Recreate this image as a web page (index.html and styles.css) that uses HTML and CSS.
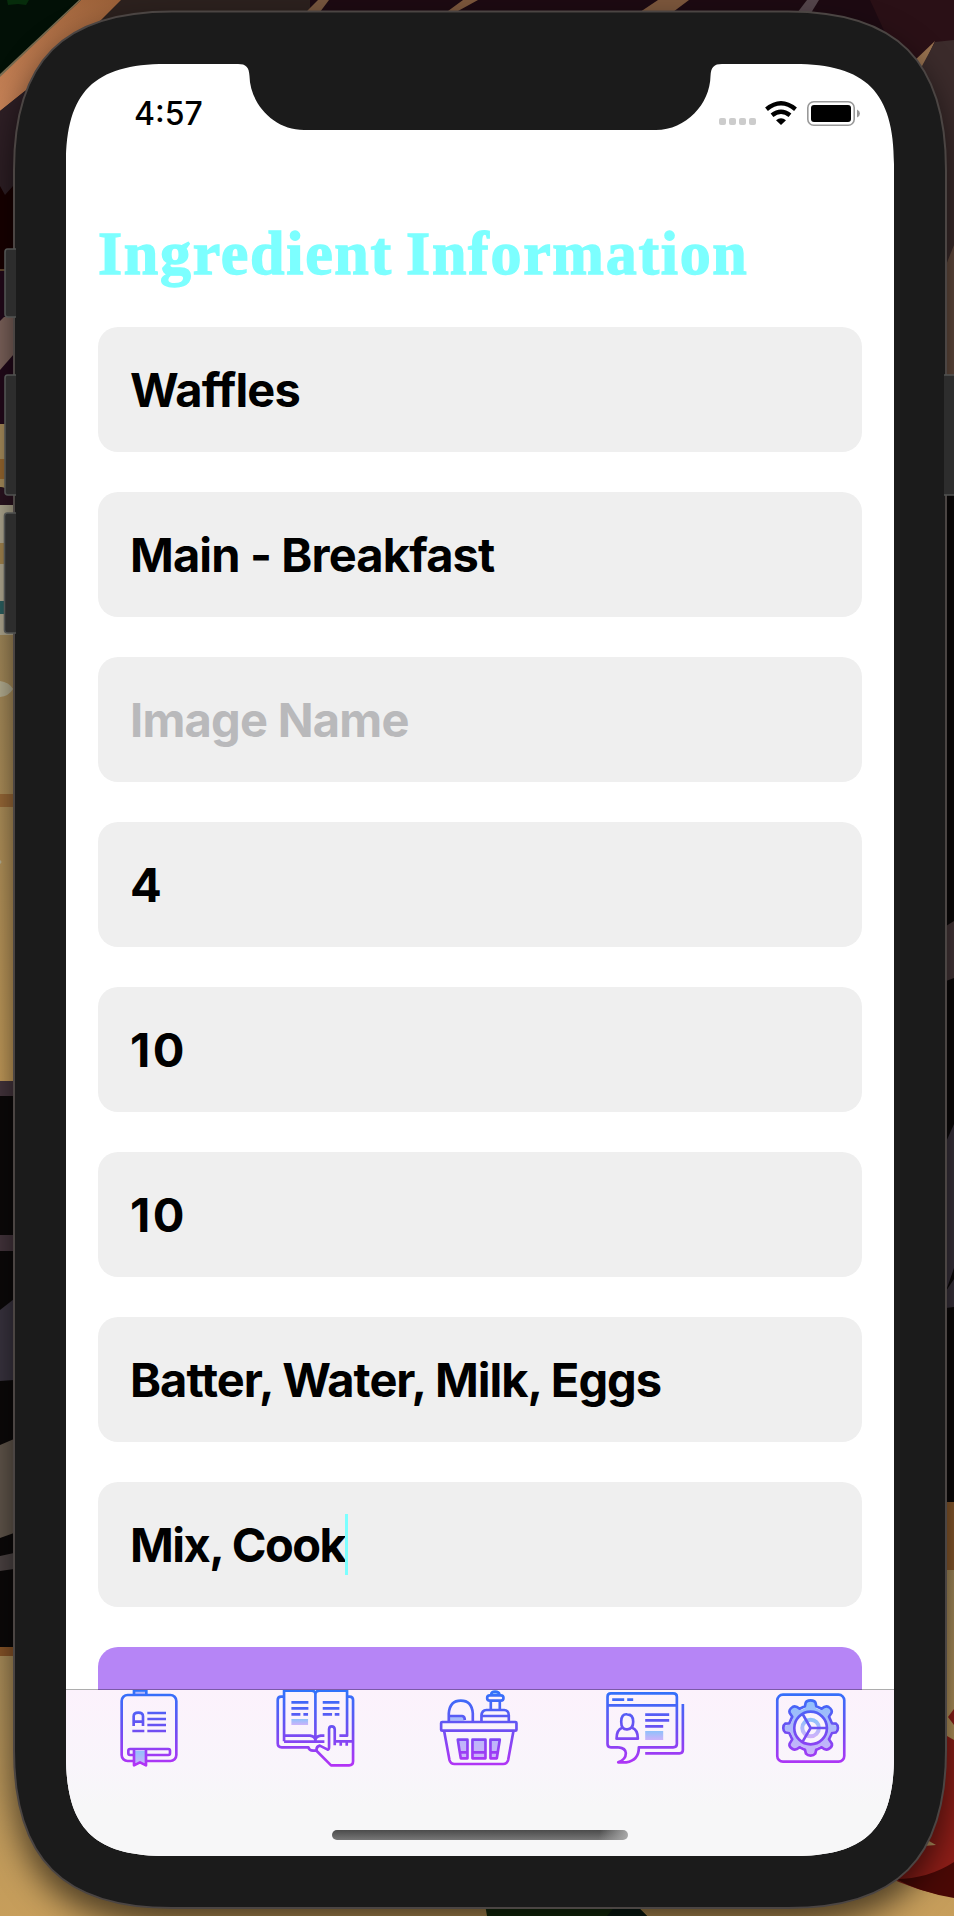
FILE: index.html
```
<!DOCTYPE html>
<html lang="en">
<head>
<meta charset="utf-8">
<title>Ingredient Information</title>
<link rel="stylesheet" href="styles.css">
</head>
<body>
<div class="desktop">
  <svg class="backdrop" viewBox="0 0 954 1916" aria-hidden="true">
    <defs>
      <linearGradient id="tan" x1="0" y1="0" x2="0" y2="1"><stop offset="0" stop-color="#a58b5b"/><stop offset="1" stop-color="#c79e5b"/></linearGradient>
      <linearGradient id="peach" x1="0" y1="1" x2="1" y2="0"><stop offset="0" stop-color="#c78257"/><stop offset="1" stop-color="#9a6038"/></linearGradient>
    </defs>
    <path fill="#0c0909" d="M0 0h954v1916H0z"/>
    <path fill="#2c211e" d="M0 60L120 0H325L0 195z"/>
    <path fill="#1d0a12" d="M310 0H954V200H310z"/>
    <path fill="#2a1016" d="M870 0h84v44l-50 30z"/>
    <path fill="#021006" d="M0 0h80L0 75z"/>
    <path fill="#062c0b" d="M7 0h22l-3 5-8-1-10 1z"/>
    <path fill="url(#peach)" d="M0 76L81 0h40L93 28 25 91 0 111z"/>
    <path fill="#776b50" d="M0 74L79 0h2L0 77z"/>
    <path fill="#77563e" d="M306 12L318 0h11l-9 12z"/>
    <path fill="#7c573c" d="M448 11L463 0h15l-20 11zM640 12L658 0h31l-16 12z"/>
    <path fill="#54454b" d="M797 13L807 0h12l-8 13z"/>
    <path fill="#97714f" d="M912 63l23-22-12 26z"/>
    <path fill="#3b2b2b" d="M922 66L935 42l19-2v210l-8 15z"/>
    <path fill="#634b3e" d="M954 245l-8 20v110h8z"/>
    <path fill="#2e1f25" d="M0 111L25 91 15 195H0z"/>
    <path fill="#180000" d="M0 186l5 9 8-9v84H0z"/>
    <path fill="#22091a" d="M0 270h14v154H0z"/>
    <path fill="#60482e" d="M0 269h14v2H0z"/>
    <path fill="#7f655d" d="M0 321l4-4h10v37L0 370z"/>
    <path fill="#a88d5b" d="M0 424h14v66L0 487z"/>
    <path fill="#97672f" d="M0 459h14v20H0z"/>
    <path fill="#2b1320" d="M0 487l14 3v15H0z"/>
    <path fill="#b3ab92" d="M0 505h14v130H0z"/>
    <path fill="#a3854f" d="M0 543h14v21H0z"/>
    <path fill="#2b6060" d="M0 601h14v13H0z"/>
    <path fill="url(#tan)" d="M0 635h14v446H0z"/>
    <path fill="#b9b294" d="M0 681q9 1 13 8-4 7-13 8zM0 860q3 2 0 4z"/>
    <path fill="#9c6b38" d="M0 794h14v13H0z"/>
    <path fill="#45353d" d="M0 1081h14v15H0zM0 1235h14v16H0z"/>
    <path fill="#3a3440" d="M0 1310l14-11v81l-14 1z"/>
    <path fill="#62574c" d="M0 1445l14-6v94l-14 5z"/>
    <path fill="#4d4444" d="M0 1556l14-3v16l-14 2z"/>
    <path fill="#8a5528" d="M0 1647h14v9H0z"/>
    <path fill="url(#tan)" d="M0 1656h940v-86h14v346H0z"/>
    <path fill="#453638" d="M946 926l8-5v57l-8 3z"/>
    <path fill="#38313b" d="M946 1142l8-18v183l-8 1z"/>
    <path fill="#0c0909" d="M946 1291l8-23v11z"/>
    <path fill="#8a5a2c" d="M946 1502h8v68h-8z"/>
    <path fill="#8e1e18" d="M948 1717l6-8v16zM880 1873L947 1736l7 4v157q-38-5-74-24z"/>
    <path fill="#4a0906" d="M896 1879q32 0 58-17v36q-35-6-58-19z"/>
    <path fill="#c1a066" d="M924 1846l5-5 7 4z"/>
    <path fill="#16300c" d="M485 1904h150l12 12H487z"/>
    <path fill="#0b1d14" d="M607 1916l10-12h18l12 12z"/>
    <g class="bezel">
      <path fill="#1b1b1b" stroke="#4b4543" stroke-width="2" d="M14 170C14 61 63 11.500 172 11.500H788C897 11.500 946 61 946 170V1750C946 1859 897 1908 788 1908H172C63 1908 14 1859 14 1750z"/>
    </g>
    <g fill="#2d2d2d" stroke="#515352" stroke-width="1.6">
      <path d="M16 249H7.500Q5 249 5 252V314Q5 317 8 317H16"/>
      <path d="M16 375H7.500Q5 375 5 378V492Q5 495 8 495H16"/>
      <path d="M16 513H7.500Q4.500 513 4.500 516V630Q4.500 633 8 633H16"/>
      <path d="M944 375H956V495H944"/>
    </g>
  </svg>

  <main class="screen">
    <header class="status">
      <span class="clock">4:57</span>
      <span class="indicators">
        <span class="cell"><i></i><i></i><i></i><i></i></span>
        <svg class="wifi" viewBox="0 0 32 24">
          <path fill="none" stroke="#000" stroke-width="4.400" d="M1.500 8.300Q16-3.700 30.500 8.300M7 14.300Q16 7 25 14.300"/>
          <path d="M11 19.300Q16 15.400 21 19.300L16 24z"/>
        </svg>
        <svg class="battery" viewBox="0 0 53 25">
          <rect x=".8" y=".8" width="46.400" height="23.400" rx="6" fill="none" stroke="#999" stroke-width="1.600"/>
          <rect x="4" y="4" width="40" height="17" rx="3"/>
          <path fill="#999" d="M50 8.500q3 1.300 3 4t-3 4z"/>
        </svg>
      </span>
    </header>

    <h1 class="title">Ingredient Information</h1>
    <form class="form">
      <div class="field">Waffles</div>
      <div class="field">Main - Breakfast</div>
      <div class="field placeholder">Image Name</div>
      <div class="field number">4</div>
      <div class="field number">10</div>
      <div class="field number">10</div>
      <div class="field list">Batter, Water, Milk, Eggs</div>
      <div class="field tight">Mix, Cook<span class="caret"></span></div>
      <div class="submit"></div>
    </form>

    <nav class="tabs">
      <svg class="tab" viewBox="131.400 180 270 270">
        <defs>
          <linearGradient id="ink" gradientUnits="userSpaceOnUse" x1="0" y1="180" x2="0" y2="410"><stop offset="0" stop-color="#2f73fb"/><stop offset=".5" stop-color="#6b50f2"/><stop offset="1" stop-color="#b532f6"/></linearGradient>
          <linearGradient id="tint" x1="0" y1="0" x2="0" y2="1"><stop offset="0" stop-color="#8fc1fb"/><stop offset="1" stop-color="#cdb2fa"/></linearGradient>
        </defs>
        <path class="soft" d="M222 181h36v12h-36z"/>
        <g class="line">
          <rect x="185" y="195" width="164" height="198" rx="18"/>
          <path d="M222 195V181H259V195M221 288V259Q221 248 235 248T249 259V288M221 275H249M262 249H318M262 267H318M262 285H318M262 303H318M217 303H253"/>
          <rect x="205" y="357" width="125" height="18" rx="5"/>
        </g>
        <path class="soft" d="M225 362h30v42l-15-8-15 8z"/>
        <path class="line" d="M222 360V406L240 397 258 406V360"/>
      </svg>
      <svg class="tab" viewBox="628.200 180 270 270">
        <path class="soft" d="M693 267h50v18h-50z"/>
        <g class="line">
          <path d="M671 334V182H753Q765 182 765 193V322M765 193Q765 182 778 182H860V317H837M671 200H662Q652 200 652 210V340Q652 352 664 352H744Q746 362 758 362H772M860 200H867Q878 200 878 210V394Q878 406 866 406H812L769 363Q766 350 778 347L802 359Q806 360 806 350V298Q806 289 814 289T823 298V346M671 317H749Q765 320 765 331 765 320 781 317H792M671 335H792M823 334H878M841 336V347M859 336V347"/>
          <path d="M693 217H744M693 235H744M693 253H720M729 253H743M787 217H837M787 235H837M787 253H815M823 253H837"/>
        </g>
      </svg>
      <svg class="tab" viewBox="195 180 270 270">
        <path class="soft" d="M237 256h43q4 0 4 16h-47zM264 329h30l-4 56h-16zM308 329h39v56h-39zM362 329h28l-10 56h-18zM363 187h26v8h-26z"/>
        <g class="line">
          <rect x="214" y="276" width="226" height="26" rx="3"/>
          <path d="M237 274V250Q240 212 273 212T309 250V274M237 258H277Q285 259 285 270M335 273V256Q336 241 350 240H403Q417 241 417 256V273M337 258H417M363 238V214M390 238V214"/>
          <rect x="352" y="196" width="49" height="16" rx="8"/>
          <path d="M364 193Q365 185 376 185T389 193M223 303L239 390Q242 402 254 402H400Q412 402 415 390L431 303"/>
          <path d="M264 329H293V385H273Q267 350 264 329zM308 329H347V385H308zM362 329H390L381 385H362zM270 367H293M308 367H347M362 367H386"/>
        </g>
      </svg>
      <svg class="tab" viewBox="691.800 180 270 270">
        <path class="soft" d="M825 303h54v27h-54z"/>
        <g class="line">
          <path d="M745 352H722Q712 352 712 342V200Q712 190 722 190H909Q920 190 920 200V342Q920 352 909 352H806Q806 392 768 397H744Q767 389 767 369 766 354 745 352M712 226H920M726 209H762M771 209H789M938 222V360Q938 370 928 370H825M825 254H897M825 271H897M825 289H879"/>
          <path d="M771 253Q789 253 789 275T771 298 753 275 771 253zM756 293Q739 299 739 326H803Q803 299 786 293"/>
        </g>
      </svg>
      <svg class="tab" viewBox="258.600 180 270 270">
        <rect class="line" x="293" y="194" width="201" height="201" rx="17"/>
        <path class="soft" fill-rule="evenodd" d="M380 214q13-8 26 0l4 21 11 5 17-12q18 4 20 20l-11 18 7 17 20 5q8 7 0 13l-20 5-7 17 11 18q-2 16-20 20l-17-12-11 5-4 21q-13 7-26 0l-5-21-10-5-17 12q-18-4-20-20l12-18-7-17-20-5q-8-6 0-13l20-5 7-17-12-18q2-16 20-20l17 12 10-5zM345 294a48 48 0 1 0 96 0 48 48 0 1 0-96 0z"/>
        <circle cx="393" cy="294" r="25" fill="none" stroke="url(#tint)" stroke-width="12"/>
        <g class="line">
          <path d="M378 219Q380 211 393 211T408 219L410 229 426 236Q438 226 447 231 459 239 456 248L448 260 457 280 469 281Q475 285 475 294T469 307L457 309 448 328 457 341Q459 350 447 357 438 362 426 352L410 359 407 371Q402 377 393 377T379 371L376 359 360 352Q348 362 339 357 327 350 330 341L338 328 329 309 317 307Q311 303 311 294T317 281L329 280 338 260 330 248Q327 239 339 231 348 226 360 236L376 229z"/>
          <circle cx="393" cy="294" r="49"/>
          <path d="M369 252L393 294 369 335M393 294H442"/>
        </g>
      </svg>
    </nav>
    <div class="home"></div>
  </main>
</div>
</body>
</html>
```
FILE: styles.css
```
* { box-sizing: border-box; }
body { margin: 0; background: #111; }
.desktop { position: relative; width: 954px; height: 1916px; padding: 64px 60px 60px 66px; overflow: hidden; }
.backdrop { position: absolute; inset: 0; width: 954px; height: 1916px; }
.bezel { filter: drop-shadow(0 16px 16px rgba(0, 0, 0, .6)); }

.screen {
  position: relative;
  display: flex;
  flex-direction: column;
  width: 828px;
  height: 1792px;
  background: #fff;
  font-family: Inter, "Liberation Sans", sans-serif;
  color: #000;
  clip-path: path("M0 100C0 28 28 0 100 0H172C180 0 183 3 183.500 12C184 40 208 66 238 66H590C620 66 644 40 644.500 12C645 3 648 0 656 0H728C800 0 828 28 828 100V1692C828 1764 800 1792 728 1792H100C28 1792 0 1764 0 1692Z");
}

.status { display: flex; justify-content: space-between; height: 100px; padding: 30px 34px 0 68px; }
.clock { font-size: 32px; font-weight: 550; line-height: 40px; letter-spacing: 0; }
.indicators { display: flex; align-items: flex-start; padding-top: 7px; }
.cell { display: flex; gap: 3px; margin: 17px 9px 0 0; }
.cell i { width: 7px; height: 7px; border-radius: 2px; background: #ccc; }
.wifi { width: 32px; height: 24px; margin-right: 10px; }
.battery { width: 53px; height: 25px; }

.title {
  height: 119px;
  margin: 44px 32px 0;
  font: 700 62px/90px "Liberation Serif", serif;
  letter-spacing: 1.7px;
  word-spacing: -4px;
  white-space: nowrap;
  color: #7cffff;
  -webkit-text-stroke: 1.3px #7cffff;
}
.form { display: flex; flex-direction: column; gap: 40px; flex: none; height: 1426px; margin: 0 32px; overflow: hidden; }
.field {
  display: flex;
  align-items: center;
  flex: none;
  height: 125px;
  padding: 0 32px;
  border-radius: 20px;
  background: #efefef;
  font-size: 47px;
  font-weight: 680;
  letter-spacing: -.85px;
  white-space: pre;
}
.number { letter-spacing: 2.5px; }
.list { letter-spacing: -1px; }
.tight { letter-spacing: -1.5px; }
.placeholder { letter-spacing: -.75px; color: #b9b9bb; }
.caret { width: 3px; height: 61px; background: #7cffff; }
.submit { flex: none; height: 125px; border-radius: 20px; background: #b685f6; }

.tabs {
  display: flex;
  position: absolute;
  inset: 1625px 0 0;
  border-top: 1px solid rgba(0, 0, 0, .32);
  background: linear-gradient(#fcf2fc, #f9f5fb 45%, #f7f7f8 70%) padding-box;
}
.tab { flex: 1; width: 90px; height: 90px; }
.line { fill: none; stroke: url(#ink); stroke-width: 8; stroke-linejoin: round; }
.soft { fill: url(#tint); }
.home {
  position: absolute;
  left: 266px;
  top: 1766px;
  width: 296px;
  height: 10px;
  border-radius: 5px;
  background: linear-gradient(100deg, transparent 90%, #aaa), linear-gradient(#4b4b4b, #777);
}
```
